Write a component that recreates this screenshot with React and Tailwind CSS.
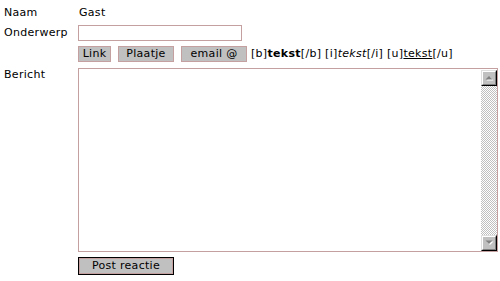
import React from 'react';

const ScrollButton = ({ down }) => (
  <div className="w-[16px] h-[16px] bg-[#c0c0c0] border-t border-l border-t-[#dfdfdf] border-l-[#dfdfdf] border-r border-b border-r-black border-b-black">
    <div className="w-full h-full border-t border-l border-white border-r border-b border-r-[#808080] border-b-[#808080] flex items-center justify-center">
      <svg width="9" height="6" viewBox="0 0 9 6">
        {down ? (
          <>
            <polygon points="1.5,1.5 8.5,1.5 5,5" fill="#ffffff" />
            <polygon points="0.5,0.5 7.5,0.5 4,4" fill="#808080" />
          </>
        ) : (
          <>
            <polygon points="1.5,5.5 8.5,5.5 5,2" fill="#ffffff" />
            <polygon points="0.5,4.5 7.5,4.5 4,1" fill="#808080" />
          </>
        )}
      </svg>
    </div>
  </div>
);

const Btn = ({ children, w }) => (
  <button
    type="button"
    className={`h-[16px] ${w} bg-[#c0c0c0] border border-[#c4a0a0] text-black text-[11px] leading-[14px] tracking-[0.3px] flex items-center justify-center`}
  >
    {children}
  </button>
);

export default function App() {
  return (
    <div className="w-[500px] h-[281px] bg-white text-black text-[11px] tracking-[0.3px] font-['DejaVu_Sans',Verdana,sans-serif] pl-[4px] pt-[5px]">
      {/* Naam */}
      <div className="flex h-[16px] leading-[16px]">
        <div className="w-[74px]">Naam</div>
        <div className="pl-[1px]">Gast</div>
      </div>

      {/* Onderwerp */}
      <div className="flex mt-[4px] h-[16px] leading-[16px]">
        <div className="w-[74px]">Onderwerp</div>
        <input
          type="text"
          className="w-[164px] h-[16px] border border-[#c4a0a0] bg-white outline-none px-[2px] text-[11px]"
        />
      </div>

      {/* bbcode buttons */}
      <div className="flex items-center mt-[5px] h-[16px] pl-[74px]">
        <div className="flex gap-[7px]">
          <Btn w="w-[33px]">Link</Btn>
          <Btn w="w-[56px]">Plaatje</Btn>
          <Btn w="w-[66px]">email @</Btn>
        </div>
        <div className="ml-[4px] leading-[16px]">
          [b]<span className="font-bold">tekst</span>[/b] [i]<span className="italic">tekst</span>[/i] [u]<span className="underline">tekst</span>[/u]
        </div>
      </div>

      {/* Bericht */}
      <div className="flex mt-[6px]">
        <div className="w-[74px] leading-[13px]">Bericht</div>
        <div className="w-[420px] h-[184px] border border-[#c4a0a0] bg-white flex">
          <textarea className="flex-1 resize-none outline-none border-0 p-[2px] text-[11px] overflow-hidden" />
          <div className="w-[16px] flex flex-col pt-[1px]">
            <ScrollButton />
            <div className="flex-1 bg-[repeating-conic-gradient(#c0c0c0_0%_25%,#ffffff_0%_50%)] bg-[length:2px_2px]" />
            <ScrollButton down />
          </div>
        </div>
      </div>

      {/* Post reactie */}
      <div className="flex mt-[5px] pl-[74px]">
        <button
          type="button"
          className="w-[96px] h-[18px] border border-black bg-[#c0c0c0]"
        >
          <div className="w-full h-full border border-[#c4a0a0] flex items-center justify-center text-[11px] leading-[14px] tracking-[0.3px]">
            Post reactie
          </div>
        </button>
      </div>
    </div>
  );
}
